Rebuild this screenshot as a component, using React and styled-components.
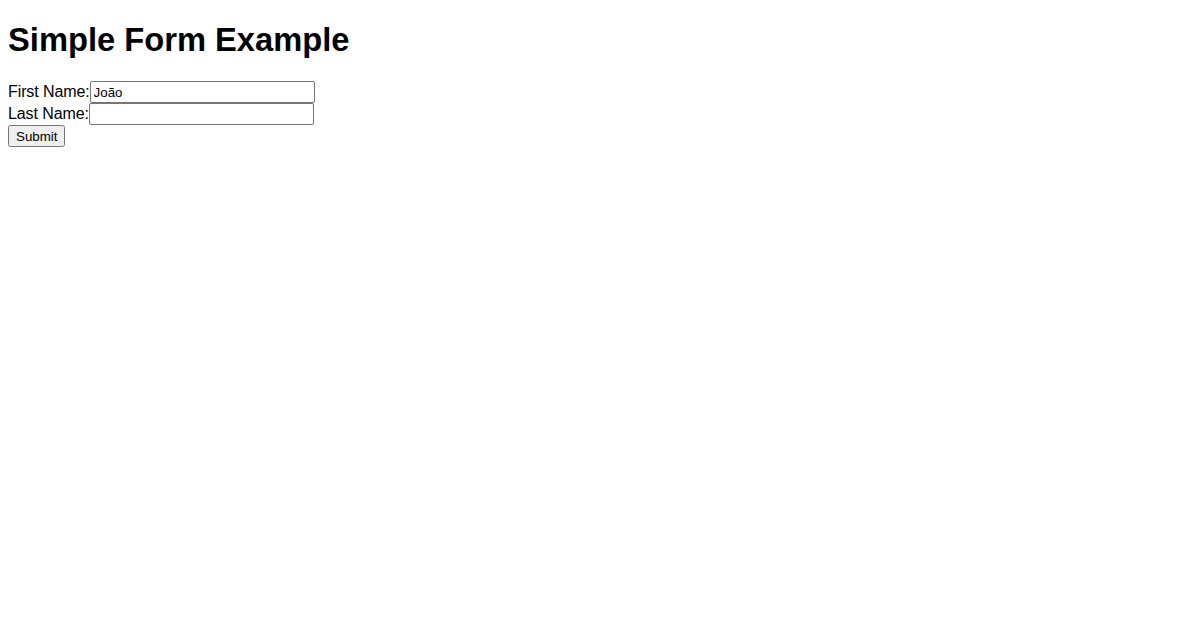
import React, { useState } from "react";
import styled, { createGlobalStyle } from "styled-components";

const GlobalStyle = createGlobalStyle`
  body {
    margin: 8px;
    font-family: "Liberation Sans", Arial, sans-serif;
    background: #fff;
    color: #000;
  }
`;

const Title = styled.h1`
  font-size: 32.7px;
  line-height: 38px;
  font-weight: bold;
  margin: 13px 0 22px;
`;

const Row = styled.div`
  font-size: 16px;
  letter-spacing: -0.1px;
  height: 22px;
  display: flex;
  align-items: center;
`;

const Input = styled.input`
  box-sizing: border-box;
  width: 225px;
  height: 22px;
  padding: 1px 3px;
  border: 1px solid #767676;
  border-radius: 2px;
  font-family: "Liberation Sans", Arial, sans-serif;
  font-size: 13.33px;
  letter-spacing: 0;
`;

const SubmitButton = styled.button`
  box-sizing: border-box;
  height: 22px;
  width: 57px;
  font-family: "Liberation Sans", Arial, sans-serif;
  font-size: 13.33px;
  padding: 1px 6px;
`;

const App = () => {
  const [first, setFirst] = useState("João");
  const [last, setLast] = useState("");

  return (
    <>
      <GlobalStyle />
      <Title>Simple Form Example</Title>
      <form onSubmit={(e) => e.preventDefault()}>
        <Row>
          <label htmlFor="first">First Name:</label>
          <Input id="first" type="text" value={first} onChange={(e) => setFirst(e.target.value)} />
        </Row>
        <Row>
          <label htmlFor="last">Last Name:</label>
          <Input id="last" type="text" value={last} onChange={(e) => setLast(e.target.value)} />
        </Row>
        <SubmitButton type="submit">Submit</SubmitButton>
      </form>
    </>
  );
};

export default App;
